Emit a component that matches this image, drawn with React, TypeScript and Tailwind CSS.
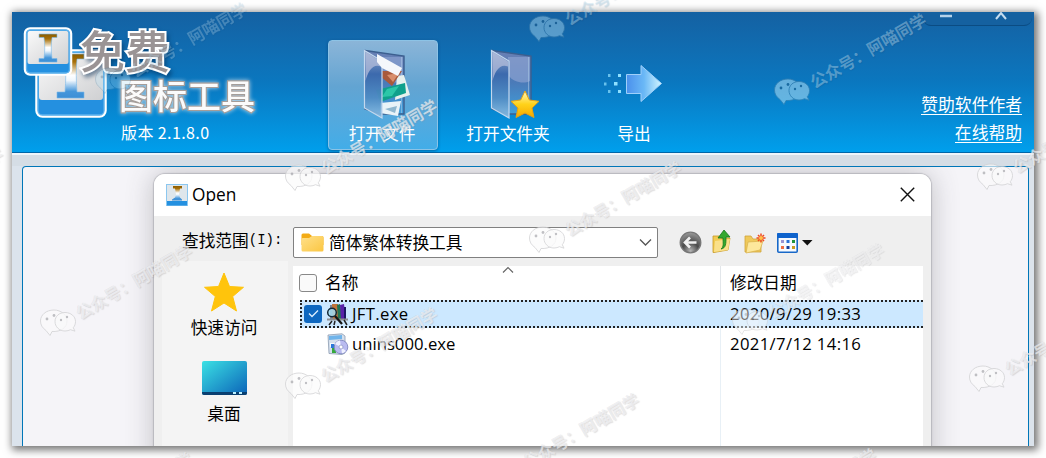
import React from "react";

const cjk = "font-['Noto_Sans_CJK_SC',sans-serif]";
const ui = "font-['Open_Sans','Noto_Sans_CJK_SC',sans-serif]";

function LogoMark() {
  return (
    <svg width="86" height="94" viewBox="0 0 86 94" className="shrink-0">
      <defs>
        <linearGradient id="pane" x1="0" y1="0" x2="1" y2="1">
          <stop offset="0" stopColor="#fafafa" />
          <stop offset="1" stopColor="#cfd0d2" />
        </linearGradient>
        <linearGradient id="beam" x1="0" y1="0" x2="0" y2="1">
          <stop offset="0" stopColor="#8a5c00" />
          <stop offset="0.18" stopColor="#a87008" />
          <stop offset="0.48" stopColor="#fff" />
          <stop offset="0.6" stopColor="#f0f7fd" />
          <stop offset="0.85" stopColor="#4596da" />
          <stop offset="1" stopColor="#3d8fd6" />
        </linearGradient>
      </defs>
      <rect x="13.500" y="24.500" width="69" height="66" rx="6" fill="#2490e0" stroke="#fff" strokeWidth="2.500" />
      <rect x="16" y="27" width="64" height="47" rx="3" fill="url(#pane)" />
      <rect x="15" y="26" width="66" height="63" rx="4.500" fill="none" stroke="#5fb2ec" strokeWidth="1.300" />
      <path d="M35 28h26v5h-7c-1 12-1 21 0 33h7v6H34v-6h8c1-12 1-21 0-33h-7z" fill="url(#beam)" stroke="#79b8ea" strokeWidth=".6" />
      <rect x="2" y="2.500" width="46" height="46" rx="5" fill="#2490e0" stroke="#fff" strokeWidth="2.500" />
      <rect x="4.500" y="5" width="41" height="33" rx="2" fill="url(#pane)" />
      <rect x="3.500" y="4" width="43" height="43" rx="4" fill="none" stroke="#5fb2ec" strokeWidth="1.300" />
      <path d="M16 8h18v3.500h-5c-1 7-1 14 0 21h5V36H16v-3.500h5c1-7 1-14 0-21h-5z" fill="url(#beam)" stroke="#79b8ea" strokeWidth=".6" />
    </svg>
  );
}

function FolderBase({ id }: { id: string }) {
  return (
    <>
      <defs>
        <linearGradient id={id + "back"} x1="0" y1="0" x2="0" y2="1">
          <stop offset="0" stopColor="#6a80b4" />
          <stop offset="0.5" stopColor="#4a7ab8" />
          <stop offset="1" stopColor="#3fa0dc" />
        </linearGradient>
        <linearGradient id={id + "flap"} x1="0" y1="0" x2="0" y2="1">
          <stop offset="0" stopColor="#96acd0" />
          <stop offset="0.35" stopColor="#3a68ac" />
          <stop offset="0.7" stopColor="#4f8cc4" />
          <stop offset="1" stopColor="#8fc0e4" />
        </linearGradient>
      </defs>
      <path d="M2 1.500 41 7v58H18L2 60z" fill={`url(#${id}back)`} stroke="#3c5f8f" strokeWidth="1.400" />
      <path d="M18 8 40 8v24c-6 3-16 2-22-6z" fill="#8fa4d2" opacity=".65" />
      <path d="M38.500 8v56" stroke="#a9c8e6" strokeWidth=".8" opacity=".7" />
    </>
  );
}

function FolderFlap({ id }: { id: string }) {
  return (
    <>
      <path d="M1.500 1.500 19 12v57L1.500 59z" fill={`url(#${id}flap)`} fillOpacity=".92" stroke="#c4d8ee" strokeWidth="1.200" />
      <path d="M2.500 3 18 12.500v5C10 14 5 22 2.500 32z" fill="#b4bedb" opacity=".75" />
    </>
  );
}

function OpenFileIcon() {
  return (
    <svg width="48" height="71" viewBox="0 0 48 71">
      <FolderBase id="a" />
      <path d="m17 54 21-2-3 15-18-3z" fill="#e9f3f8" />
      <path d="m22 60 12-3-2 7z" fill="#8fb7cf" />
      <path d="m34 27 7-1 6 20-15 5z" fill="#e8f1ee" />
      <path d="m19 22 20 0-10 15-12-10z" fill="#a85a3c" />
      <path d="m24 26 12-2-6 9z" fill="#d98e6c" />
      <path d="m13 41 29-7 1 10-26 9z" fill="#0fa08c" />
      <path d="m24 40 12-3-7 10-10 1z" fill="#2cc7a8" />
      <FolderFlap id="a" />
      <path d="m14 5 25 14-4 8-16-8-5-6z" fill="#f5f7fb" />
    </svg>
  );
}

function OpenDirIcon() {
  return (
    <svg width="50" height="71" viewBox="0 0 50 71">
      <FolderBase id="b" />
      <FolderFlap id="b" />
      <defs>
        <linearGradient id="gold" x1="0" y1="0" x2="0" y2="1">
          <stop offset="0" stopColor="#fff9c0" />
          <stop offset="0.5" stopColor="#ffd21a" />
          <stop offset="1" stopColor="#f5a800" />
        </linearGradient>
      </defs>
      <path d="m35 42 4.300 9 9.700 1.300-7 6.700 2 9.500-9-4.500-9 4.500 2-9.500-7-6.700 9.700-1.300z" fill="url(#gold)" stroke="#e8a310" strokeWidth="1" strokeLinejoin="round" />
    </svg>
  );
}

function ExportIcon() {
  return (
    <svg width="62" height="40" viewBox="0 0 62 40">
      <defs>
        <linearGradient id="arrow" x1="0" y1="0" x2="1" y2="0">
          <stop offset="0" stopColor="#4a90ec" />
          <stop offset="0.5" stopColor="#6ab8f6" />
          <stop offset="1" stopColor="#d2f6ff" />
        </linearGradient>
      </defs>
      <path d="M25.500 11.500H40V2.500L60.500 20.500 40 38.500v-8H25.500z" fill="url(#arrow)" stroke="#9fd0fa" strokeWidth="1" />
      <g fill="#8fe0ff">
        <rect x="17" y="11" width="3" height="3" /><rect x="13" y="19" width="3.500" height="3.500" /><rect x="17" y="27" width="3" height="3" />
        <g opacity=".7"><rect x="7" y="11" width="2.500" height="3" /><rect x="3" y="19.500" width="2.500" height="3" /><rect x="7" y="27" width="2.500" height="3" /></g>
      </g>
    </svg>
  );
}

function SmallAppIcon() {
  return (
    <svg width="22" height="22" viewBox="0 0 22 22">
      <rect x=".5" y=".5" width="21" height="21" fill="#dfe6eb" stroke="#8cc7ef" />
      <rect x="1" y="17" width="20" height="4.500" fill="#2490e0" />
      <path d="M7 2h9v2.500h-2l-1 6 1 3 2 2v1H6v-1l3-2 1-3-1-6H7z" fill="url(#beam)" />
    </svg>
  );
}

function FolderGlyph() {
  return (
    <svg width="23" height="19" viewBox="0 0 23 19">
      <defs>
        <linearGradient id="fy" x1="0" y1="0" x2="1" y2="1">
          <stop offset="0" stopColor="#ffe08a" />
          <stop offset="1" stopColor="#fbc642" />
        </linearGradient>
      </defs>
      <path d="M.5 2Q.5.5 2 .5h6L11 3h10q1.500 0 1.500 1.500V12H.5z" fill="#f3ab15" />
      <path d="M.5 6Q.5 5 2 5h6l3-2h10q1.500 0 1.500 1.500V17q0 1.500-1.500 1.500H2Q.5 18.500.5 17z" fill="url(#fy)" />
    </svg>
  );
}

function NavIcons() {
  return (
    <div className="flex items-center">
      <svg width="23" height="23" viewBox="0 0 23 23">
        <defs>
          <radialGradient id="ball" cx=".5" cy=".9" r=".9">
            <stop offset="0" stopColor="#b5b5b5" />
            <stop offset=".45" stopColor="#4a4a4a" />
            <stop offset="1" stopColor="#9c9c9c" />
          </radialGradient>
        </defs>
        <circle cx="11.500" cy="11.500" r="10.300" fill="url(#ball)" stroke="#777" strokeWidth="1.300" />
        <path d="M17.500 11.500H6.500M11 6.500l-5 5 5 5" fill="none" stroke="#f1f1f1" strokeWidth="2.600" />
      </svg>
      <svg width="20" height="24" viewBox="0 0 20 24" className="ml-[10px] -mt-1">
        <path d="M1 7h6l2 2h9l-2 12-14 2.500H1z" fill="#f2cb52" stroke="#c89a28" strokeWidth=".8" />
        <path d="m3 12 15-2-2 11-14 2z" fill="#fae08a" />
        <path d="M9 20c3-2 2-6 2-11H6l6-8 6 7h-4c0 7 0 11-5 12z" fill="#33a82e" stroke="#14791b" strokeWidth=".8" />
      </svg>
      <svg width="23" height="22" viewBox="0 0 23 22" className="ml-[12px]">
        <path d="M1 4h6l2 3h8v13H1z" fill="#efc95a" stroke="#d0a43a" strokeWidth=".8" />
        <path d="m4 10 15-1-3 9-14 3z" fill="#fde89c" stroke="#d9b04a" strokeWidth=".7" />
        <path d="M17 1.500v9M12.500 6h9M14 3l6 6M20 3l-6 6" stroke="#f0491f" strokeWidth="1.500" />
        <circle cx="17" cy="6" r="2" fill="#ffc14a" />
      </svg>
      <svg width="36" height="20" viewBox="0 0 36 20" className="ml-[10px]">
        <rect x=".8" y=".8" width="19.400" height="18.400" rx="1" fill="#f6faff" stroke="#1868c8" strokeWidth="1.600" />
        <rect x="0" y="0" width="21" height="5" rx="1" fill="#0f63cc" />
        <rect x="4" y="7" width="3" height="3" fill="#9a94d2" /><rect x="9.500" y="7" width="3" height="3" fill="#2a72d8" /><rect x="15" y="7" width="3" height="3" fill="#20943a" />
        <rect x="4" y="13" width="3" height="3" fill="#ee6d43" /><rect x="9.500" y="13" width="3" height="3" fill="#153e9c" /><rect x="15" y="13" width="3" height="3" fill="#c89c20" />
        <path d="M25 7h10.500l-5.200 5.500z" fill="#111" />
      </svg>
    </div>
  );
}

function BooksIcon() {
  return (
    <svg width="23" height="23" viewBox="0 0 23 23">
      <path d="M4 2h6v15H4z" fill="#7c8595" />
      <path d="M6 1h6v16H7z" fill="#c1743a" />
      <path d="m11 2 3-1 3 16h-5z" fill="#237453" />
      <path d="m14 2 4-1 2 15h-5z" fill="#5a22a8" />
      <path d="M18 4h2v12h-2z" fill="#1c1762" />
      <path d="M1 15.500h21v2H1z" fill="#8e8e90" />
      <path d="m3 22 3-4M18 17l3 5M8 22l1-4" stroke="#222" strokeWidth="1.500" />
      <circle cx="6" cy="9.500" r="4.300" fill="#a5dcf0" fillOpacity=".85" stroke="#152a38" strokeWidth="1.500" />
      <path d="m9 13 7 8" stroke="#151515" strokeWidth="2.300" />
    </svg>
  );
}

function InstallerIcon() {
  return (
    <svg width="22" height="22" viewBox="0 0 22 22">
      <path d="M1 2 15 .8 18 3v17l-3 1.500L2 20.500z" fill="#d5dfec" stroke="#8a9ab0" strokeWidth=".8" />
      <path d="M2 3 15 2v4L2 7z" fill="#70b4ea" />
      <path d="M3 10h9v4H3z" fill="#f4f8fd" />
      <path d="M5 12h4v8H5z" fill="#35a93b" />
      <path d="M4 11h3v4H4z" fill="#2b76d8" />
      <circle cx="14" cy="14" r="6.800" fill="#b9bbf0" stroke="#8087c0" strokeWidth=".9" />
      <path d="M14 14 8 11a6.800 6.800 0 0 1 5-3.700zM14 14l5 4a6.800 6.800 0 0 1-4 2.500z" fill="#eef0ff" />
      <circle cx="14" cy="14" r="2" fill="#fff" stroke="#9298c8" strokeWidth=".8" />
    </svg>
  );
}

const marks = [
  [-131, 225, 1], [113, 80, 0.7], [58, 322, 1], [303, 177, 1], [547, 28, 1], [303, 385, 1], [547, 239, 1],
  [792, 91, 1.25], [750, 321, 0.7], [995, 176, 1], [987, 378, 1], [58, 530, 1], [505, 471, 1], [742, 526, 1],
];

function Watermark({ x, y, strength }: { x: number; y: number; strength: number }) {
  const onBlue = y < 110;
  return (
    <div className="absolute h-0 w-0" style={{ left: x, top: y }}>
      <svg width="38" height="30" viewBox="0 0 38 30" className="absolute -left-[19px] -top-[14px]" style={{ opacity: strength * (onBlue ? 0.42 : 0.85) }}>
        <g fill={onBlue ? "#b8e4f8" : "#fbfbfb"} fillOpacity={onBlue ? 1 : 0.75} stroke={onBlue ? "#4e86aa" : "#d0d0d3"} strokeWidth=".9">
          <path d="M15 2C7 2 1.500 7 1.500 13c0 4 2 7 5.500 9.500l4 5 2-4c9 .5 15-4 15-10.500C28 7 22 2 15 2z" />
          <path d="M26 4.500c-6 0-10 4-10 9s4 9.500 10 9.500c2 0 4-.5 5.500-1.300l4.500 1.500-1.700-3.500c1.500-1.700 2.200-4 2.200-6.200 0-5-4.500-9-10.500-9z" />
        </g>
        <g fill={onBlue ? "#285f86" : "#b6b6ba"}>
          <circle cx="8" cy="11" r="1.400" /><circle cx="15" cy="7.500" r="1.400" /><circle cx="22" cy="12" r="1.200" /><circle cx="28" cy="9" r="1.200" />
        </g>
      </svg>
      <span
        className={`absolute left-[19px] -top-[20px] origin-left -rotate-[30deg] whitespace-nowrap text-[16.400px] leading-[24px] font-bold ${cjk}`}
        style={{
          color: onBlue ? "rgba(190,222,238,0.42)" : "rgba(244,244,246,0.66)",
          textShadow: onBlue ? "0 1px 1px rgba(20,60,100,0.15)" : "0.5px 1px 1px rgba(130,130,135,0.26), -0.5px -0.5px 0.5px rgba(170,170,175,0.18)",
          opacity: Math.min(1, strength),
        }}
      >
        公众号：阿喵同学
      </span>
    </div>
  );
}

function Place({ icon, label, className }: { icon: React.ReactNode; label: string; className: string }) {
  return (
    <div className={`flex flex-col items-center ${className}`}>
      {icon}
      <span className={`text-[16.700px] leading-[22px] ${cjk}`}>{label}</span>
    </div>
  );
}

export default function App() {
  return (
    <div className="relative h-[458px] w-[1046px] overflow-hidden bg-white pl-3 pt-3 text-black">
      <div className="flex h-[434px] w-[1022px] flex-col overflow-hidden bg-[#dbe3ec] shadow-[2px_2px_8px_2px_rgba(0,0,0,0.55)]">
        <header className="flex h-[141px] shrink-0 border-b border-[#0066a8] bg-linear-to-b from-[#1461a2] via-[#0a77bf] via-50% to-[#009fec]">
          <div className="flex w-[316px] shrink-0 pl-[11px] pt-[14px]">
            <LogoMark />
            <div className={`relative -ml-[29px] flex flex-col whitespace-nowrap text-white ${cjk}`}>
              <span className="-mt-[3px] text-[45px] leading-[54px] font-medium text-[#9a9495] [-webkit-text-stroke:4px_#fff] [paint-order:stroke_fill] [filter:drop-shadow(2px_3px_2px_rgba(0,40,80,.5))]">免费</span>
              <span className="-mt-[2px] ml-[39px] text-[34px] leading-[40px] font-medium text-[#fbfbfb] [-webkit-text-stroke:2.200px_#a59d99] [paint-order:stroke_fill] [filter:drop-shadow(0_0_2px_#bcd4e4)]">图标工具</span>
              <span className="mt-[7px] ml-[41px] text-[16px] leading-[20px] tracking-[0.400px]">版本 2.1.8.0</span>
            </div>
          </div>
          <div className="mt-7 flex h-[110px] w-[110px] shrink-0 flex-col items-center rounded-[4px] border border-[#8cc3e6] bg-linear-to-b from-[#8bb5d8] via-[#62a4d2] via-42% to-[#42ade8] pt-2 shadow-[0_1px_3px_rgba(0,50,100,0.5)]">
            <div className="ml-[8px] h-[71px]"><OpenFileIcon /></div>
            <span className={`mt-[2px] -ml-[2px] text-[16.700px] leading-[22px] text-white ${cjk}`}>打开文件</span>
          </div>
          <div className="mt-7 flex w-[140px] shrink-0 flex-col items-center pt-[9px]">
            <div className="ml-[14px] h-[71px]"><OpenDirIcon /></div>
            <span className={`mt-[2px] text-[16.700px] leading-[22px] text-white ${cjk}`}>打开文件夹</span>
          </div>
          <div className="mt-7 flex w-[112px] shrink-0 flex-col items-center pt-[23px]">
            <div className="-ml-[4px] h-[57px]"><ExportIcon /></div>
            <span className={`mt-[2px] text-[16.700px] leading-[22px] text-white ${cjk}`}>导出</span>
          </div>
          <div className="flex flex-1 flex-col items-end pr-3">
            <div className="-mr-[10px] flex h-[14px] w-[109px] justify-around rounded-b-[8px] border-b border-[#0b4c83] bg-[#1561a0]">
              <svg width="16" height="10" viewBox="0 0 16 10" className="-ml-2"><path d="M2 4h12" stroke="#b4d2ea" strokeWidth="2.500" /></svg>
              <svg width="16" height="10" viewBox="0 0 16 10" className="-ml-2"><path d="m3 7 5-6 5 6" fill="none" stroke="#c4dcf0" strokeWidth="2" /></svg>
            </div>
            <div className={`mt-[68px] flex flex-col items-end text-[16.800px] leading-[22px] text-white ${cjk}`}>
              <a className="border-b border-white leading-[20px]">赞助软件作者</a>
              <a className="mt-[7px] border-b border-white leading-[20px]">在线帮助</a>
            </div>
          </div>
        </header>
        <div className="h-[13px] shrink-0 border-t-2 border-[#eef5fa] bg-[#d5dde5]" />
        <main className="mr-[5px] ml-[10px] flex min-h-0 flex-1 overflow-hidden rounded-t-[4px] border-x-[1.500px] border-t-[1.500px] border-[#0076b8] bg-[#f5f4f8]">
          <section className="ml-[131px] mt-[7px] flex h-[300px] w-[777px] shrink-0 flex-col overflow-hidden rounded-t-[11px] bg-[#efefef] shadow-[0_0_28px_rgba(60,60,70,0.3),0_0_1px_1px_rgba(190,190,195,0.7)]">
            <div className={`flex h-[42px] shrink-0 items-center bg-white pl-3 pr-4 ${ui}`}>
              <SmallAppIcon />
              <span className="ml-1 flex-1 text-[17.300px]">Open</span>
              <svg width="15" height="15" viewBox="0 0 15 15" className="-mt-[2px]"><path d="m.8.8 13.400 13.400M14.200.8.8 14.200" stroke="#111" strokeWidth="1.400" /></svg>
            </div>
            <div className="flex h-[50px] shrink-0 items-center pl-[28px] pt-[3px]">
              <span className={`flex w-[111px] text-[16.700px] leading-5 ${cjk} -mt-[6px]`}>查找范围<span className="font-['Liberation_Mono',monospace] text-[14px]">(I):</span></span>
              <div className="flex h-[31px] w-[365px] items-center rounded-[2px] border border-[#808080] bg-white pl-[7px] pr-[5px]">
                <FolderGlyph />
                <span className={`ml-[5px] flex-1 text-[16.700px] ${cjk}`}>简体繁体转换工具</span>
                <svg width="13" height="9" viewBox="0 0 13 9"><path d="m1 1.500 5.500 5.500L12 1.500" fill="none" stroke="#555" strokeWidth="1.300" /></svg>
              </div>
              <div className="ml-[21px]"><NavIcons /></div>
            </div>
            <div className="flex flex-1 pl-2 pr-2">
              <aside className="-mt-[5px] flex w-[126px] flex-col bg-[#f4f4f4] pt-[10px]">
                <Place
                  className="w-[124px]"
                  label="快速访问"
                  icon={<svg width="42" height="42" viewBox="0 0 42 42" className="mb-[3px]"><path d="m21 2 5.500 13.500 14 .8-10.800 9.200L33.500 40 21 32 8.500 40l3.800-14.500L1.500 16.300l14-.8z" fill="#ffc40c" stroke="#ffc40c" strokeLinejoin="round" /></svg>}
                />
                <Place
                  className="mt-[23px] w-[124px]"
                  label="桌面"
                  icon={
                    <svg width="45" height="34" viewBox="0 0 45 34" className="mb-[7px]">
                      <defs><linearGradient id="desk" x1="0" y1="0" x2="1" y2="1"><stop offset="0" stopColor="#3be1e4" /><stop offset="1" stopColor="#0b62b8" /></linearGradient></defs>
                      <rect width="45" height="34" rx="2" fill="url(#desk)" />
                      <path d="M0 31h45v1q0 2-2 2H2q-2 0-2-2z" fill="#0a3f70" />
                      <path d="M31 31h3v2h-3zM37 31h3v2h-3z" fill="#bdf1ff" />
                    </svg>
                  }
                />
              </aside>
              <div className="ml-[5px] flex flex-1 flex-col bg-white">
                <div className="flex h-[34px] items-center pl-[6px]">
                  <span className="h-[18px] w-[18px] rounded-[3px] border-[1.500px] border-[#888] bg-[#fafafa]" />
                  <span className={`ml-[8px] w-[180px] text-[16.700px] ${cjk}`}>名称</span>
                  <svg width="12" height="8" viewBox="0 0 12 8" className="-mt-[26px] -ml-[3px]"><path d="m1 6.500 5-5 5 5" fill="none" stroke="#666" strokeWidth="1.200" /></svg>
                  <div className={`ml-[206px] flex h-[34px] items-center border-l border-[#e2e6ea] pl-[9px] text-[16.700px] ${cjk}`}>修改日期</div>
                </div>
                <div className={`ml-[7px] flex h-[28px] items-center border-2 border-r-0 border-dotted border-[#222] bg-[#cce8ff] text-[16.700px] ${ui}`}>
                  <span className="ml-[2px] flex h-[18px] w-[18px] items-center justify-center rounded-[3px] bg-[#0d67c0]"><svg width="11" height="8" viewBox="0 0 11 8"><path d="m1 3.500 3 3 6-6" fill="none" stroke="#dceeff" strokeWidth="1.300" /></svg></span>
                  <div className="ml-[4px] w-[23px]"><BooksIcon /></div>
                  <span className="ml-[3px] w-[378px] tracking-[0.350px]">JFT.exe</span>
                  <span className="tracking-[0.350px]">2020/9/29 19:33</span>
                </div>
                <div className={`flex min-h-0 flex-1 text-[16.700px] ${ui}`}>
                  <div className="flex h-[31px] w-[427px] items-center pl-[34px]">
                    <InstallerIcon />
                    <span className="ml-[3px]">unins000.exe</span>
                  </div>
                  <div className="flex h-full items-start border-l border-[#e8f0f6] pl-[9px] leading-[31px] tracking-[0.350px]">2021/7/12 14:16</div>
                </div>
              </div>
            </div>
          </section>
        </main>
      </div>
      <div className="pointer-events-none absolute inset-0 overflow-hidden">
        {marks.map(([x, y, s]) => <Watermark key={`${x}-${y}`} x={x} y={y} strength={s} />)}
      </div>
    </div>
  );
}
